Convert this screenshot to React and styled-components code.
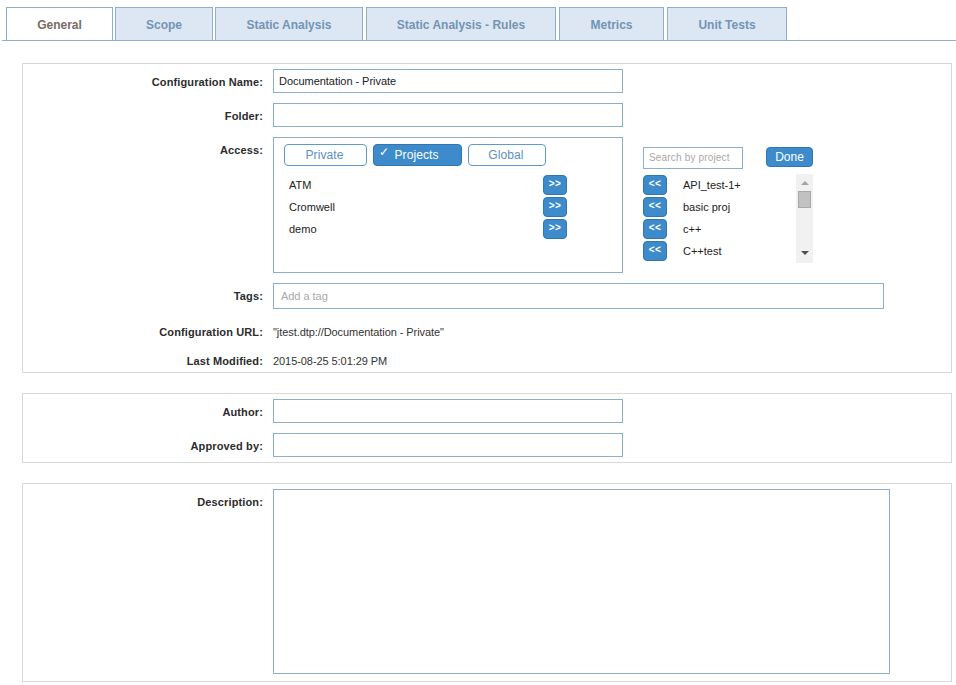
import React from "react";
import styled, { createGlobalStyle } from "styled-components";

const Global = createGlobalStyle`
  html, body { margin: 0; padding: 0; background: #fff; }
  body { font-family: "Liberation Sans", Arial, sans-serif; font-size: 11px; color: #222; }
  * { box-sizing: border-box; }
`;

const Page = styled.div`
  width: 956px;
  height: 685px;
  overflow: hidden;
  padding-top: 7px;
`;

const TabBar = styled.div`
  display: flex;
  height: 34px;
  margin-left: 2px;
  padding-left: 4px;
  border-bottom: 1px solid #8cafcc;
`;

const Tab = styled.div`
  width: ${(p) => p.$w}px;
  margin-left: ${(p) => p.$gap || 0}px;
  height: 33px;
  display: flex;
  align-items: center;
  justify-content: center;
  padding-top: 1px;
  border: 1px solid #8cafcc;
  border-bottom: 0;
  background: ${(p) => (p.$active ? "#fff" : "#dce7f3")};
  color: ${(p) => (p.$active ? "#7a6a62" : "#7394b4")};
  font-size: 12px;
  font-weight: bold;
`;

const Content = styled.div`
  display: flex;
  flex-direction: column;
  gap: 20px;
  margin: 22px 4px 0 22px;
`;

const Section = styled.section`
  height: ${(p) => p.$h}px;
  padding: 5px 0 0;
  border: 1px solid #d8d8d8;
  display: flex;
  flex-direction: column;
  gap: ${(p) => p.$gap || 10}px;
`;

const Row = styled.div`
  display: flex;
  align-items: ${(p) => (p.$top ? "flex-start" : "center")};
  gap: 10px;
  height: ${(p) => (p.$h ? `${p.$h}px` : "auto")};
  margin-top: ${(p) => p.$mt || 0}px;
`;

const Label = styled.label`
  width: 240px;
  flex: none;
  text-align: right;
  font-weight: bold;
  color: #2c2c2c;
  letter-spacing: 0.13px;
  padding-top: ${(p) => p.$pt || 0}px;
`;

const Field = styled.div`
  width: ${(p) => p.$w || 350}px;
  height: ${(p) => p.$h || 24}px;
  border: 1px solid #8cafcc;
  display: flex;
  align-items: center;
  padding-left: ${(p) => p.$pl || 5}px;
  padding-bottom: 1px;
  letter-spacing: -0.04px;
  color: ${(p) => (p.$muted ? "#a8a8a8" : "#222")};
  background: #fff;
  flex: none;
`;

const Value = styled.span`
  color: #333;
  letter-spacing: -0.07px;
`;

const AccessBox = styled.div`
  width: 350px;
  height: 136px;
  flex: none;
  border: 1px solid #8cafcc;
  padding: 6px 55px 0 10px;
`;

const Toggles = styled.div`
  display: flex;
  gap: 6px;
  margin-bottom: 9px;
`;

const Toggle = styled.div`
  width: ${(p) => p.$w}px;
  height: 22px;
  border-radius: 4px;
  border: 1px solid ${(p) => (p.$on ? "#2f77ae" : "#5b9bd0")};
  background: ${(p) => (p.$on ? "#3d8bcb" : "#fff")};
  color: ${(p) => (p.$on ? "#fff" : "#5b8fc5")};
  font-size: 12px;
  letter-spacing: 0.1px;
  display: flex;
  align-items: center;
  justify-content: center;
  gap: 5px;
  padding: 0 ${(p) => (p.$on ? 12 : 2)}px 1px 0;
`;

const Check = styled.span`
  font-size: 12px;
  line-height: 1;
  margin-top: -5px;
  margin-left: -5px;
`;

const ItemRow = styled.div`
  height: 22px;
  display: flex;
  align-items: flex-start;
  justify-content: space-between;
  padding-left: 5px;
  > span { padding-top: 4px; }
`;

const Shift = styled.button`
  width: 24px;
  height: 20px;
  padding: 0 0 4px;
  border-radius: 4px;
  border: 1px solid #2f77ae;
  background: #3d8bcb;
  color: #fff;
  font: bold 10px "Liberation Sans", Arial, sans-serif;
  letter-spacing: 0.5px;
  display: flex;
  align-items: center;
  justify-content: center;
`;

const Side = styled.div`
  margin-left: 10px;
  padding-top: 10px;
  width: 170px;
  flex: none;
`;

const SideTop = styled.div`
  display: flex;
  align-items: flex-start;
  justify-content: space-between;
  height: 26px;
`;

const Search = styled.div`
  width: 100px;
  height: 22px;
  border: 1px solid #8cafcc;
  color: #a8a8a8;
  font-size: 10px;
  letter-spacing: 0.17px;
  display: flex;
  align-items: center;
  padding-left: 5px;
  padding-bottom: 1px;
`;

const Done = styled.button`
  width: 47px;
  height: 20px;
  padding: 0 0 1px;
  border-radius: 4px;
  border: 1px solid #2f77ae;
  background: #3d8bcb;
  color: #fff;
  font: 12px "Liberation Sans", Arial, sans-serif;
`;

const PickList = styled.div`
  display: flex;
  justify-content: space-between;
  height: 89px;
  margin-top: 1px;
`;

const PickRows = styled.div`
  width: 140px;
  padding-top: 1px;
`;

const PickRow = styled.div`
  height: 22px;
  display: flex;
  align-items: flex-start;
  gap: 16px;
  > span { padding-top: 4px; }
`;

const ScrollTrack = styled.div`
  width: 17px;
  height: 89px;
  background: #f1f1f1;
  display: flex;
  flex-direction: column;
  align-items: center;
  padding-top: 7px;
`;

const ArrowUp = styled.i`
  display: block;
  width: 0;
  height: 0;
  border-left: 4px solid transparent;
  border-right: 4px solid transparent;
  border-bottom: 4px solid #a3a3a3;
`;

const ArrowDown = styled.i`
  display: block;
  width: 0;
  height: 0;
  margin-top: 43px;
  border-left: 4px solid transparent;
  border-right: 4px solid transparent;
  border-top: 4px solid #505050;
`;

const Thumb = styled.div`
  width: 13px;
  height: 17px;
  margin-top: 6px;
  background: #c1c1c1;
  border: 1px solid #a8a8a8;
`;

const tabs = [
  ["General", 107, 0, true],
  ["Scope", 98, 2],
  ["Static Analysis", 148, 2],
  ["Static Analysis - Rules", 190, 3],
  ["Metrics", 105, 3],
  ["Unit Tests", 120, 3],
];

export default function App() {
  return (
    <Page>
      <Global />
      <TabBar>
        {tabs.map(([name, w, gap, active]) => (
          <Tab key={name} $w={w} $gap={gap} $active={active}>{name}</Tab>
        ))}
      </TabBar>
      <Content>
        <Section $h={310}>
          <Row>
            <Label $pt={1}>Configuration Name:</Label>
            <Field>Documentation - Private</Field>
          </Row>
          <Row>
            <Label $pt={1}>Folder:</Label>
            <Field />
          </Row>
          <Row $top>
            <Label $pt={7}>Access:</Label>
            <AccessBox>
              <Toggles>
                <Toggle $w={83}>Private</Toggle>
                <Toggle $w={89} $on><Check>✓</Check>Projects</Toggle>
                <Toggle $w={78}>Global</Toggle>
              </Toggles>
              {["ATM", "Cromwell", "demo"].map((n) => (
                <ItemRow key={n}>
                  <span>{n}</span>
                  <Shift>&gt;&gt;</Shift>
                </ItemRow>
              ))}
            </AccessBox>
            <Side>
              <SideTop>
                <Search>Search by project</Search>
                <Done>Done</Done>
              </SideTop>
              <PickList>
                <PickRows>
                  {["API_test-1+", "basic proj", "c++", "C++test"].map((n) => (
                    <PickRow key={n}>
                      <Shift>&lt;&lt;</Shift>
                      <span>{n}</span>
                    </PickRow>
                  ))}
                </PickRows>
                <ScrollTrack>
                  <ArrowUp />
                  <Thumb />
                  <ArrowDown />
                </ScrollTrack>
              </PickList>
            </Side>
          </Row>
          <Row>
            <Label>Tags:</Label>
            <Field $w={611} $h={26} $pl={7} $muted>Add a tag</Field>
          </Row>
          <Row $h={16} $mt={5}>
            <Label>Configuration URL:</Label>
            <Value>"jtest.dtp://Documentation - Private"</Value>
          </Row>
          <Row $h={16} $mt={3}>
            <Label>Last Modified:</Label>
            <Value>2015-08-25 5:01:29 PM</Value>
          </Row>
        </Section>
        <Section $h={70}>
          <Row>
            <Label $pt={1}>Author:</Label>
            <Field />
          </Row>
          <Row>
            <Label $pt={1}>Approved by:</Label>
            <Field />
          </Row>
        </Section>
        <Section $h={199}>
          <Row $top>
            <Label $pt={7}>Description:</Label>
            <Field $w={617} $h={185} />
          </Row>
        </Section>
      </Content>
    </Page>
  );
}
